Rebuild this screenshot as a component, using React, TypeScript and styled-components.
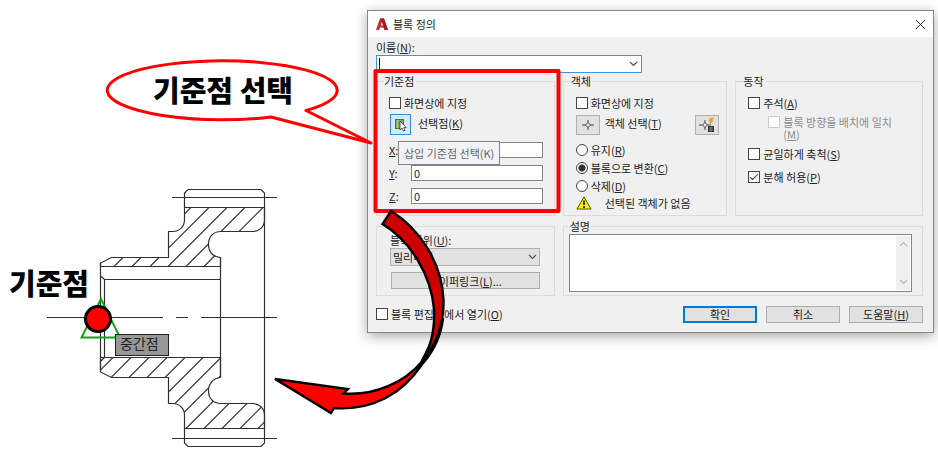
import React, { useState } from 'react';
import styled, { createGlobalStyle } from 'styled-components';

const GlobalStyle = createGlobalStyle`
  *, *::before, *::after { box-sizing: border-box; }
  body {
    margin: 0;
    background: #fff;
    color: #222;
    font: 11px/12px "Noto Sans CJK KR", sans-serif;
  }
  button, input, select, textarea { font: inherit; color: inherit; margin: 0; }
  u { text-underline-offset: 1px; }
`;

const Scene = styled.main`
  position: relative;
  display: flex;
  align-items: flex-start;
`;

const GearFigure = styled.svg`
  flex: 0 0 366px;
  width: 366px;
  height: 456px;
`;

const Annotations = styled.svg`
  position: absolute;
  top: 0;
  left: 0;
  pointer-events: none;
`;

const Dialog = styled.form`
  flex: 1;
  margin: 10px 4px 0 1px;
  border: 1px solid #868686;
  background: #f0f0f0;
  box-shadow: 0 3px 12px rgba(0, 0, 0, 0.35);
`;

const TitleBar = styled.header`
  display: flex;
  align-items: center;
  gap: 5px;
  height: 26px;
  padding: 0 7px 0 8px;
  background: #fff;
`;

const Title = styled.h1`
  flex: 1;
  margin: 0;
  font-size: 11px;
  font-weight: 400;
`;

const IconButton = styled.button`
  display: flex;
  padding: 0;
  border: 0;
  background: none;
`;

const Body = styled.div`
  padding: 4px 10px 9px 8px;
`;

const NameField = styled.label`
  display: block;
`;

const Combo = styled.span`
  display: flex;
  align-items: center;
  width: 266px;
  height: 18px;
  margin-top: 2px;
  padding-right: 3px;
  border: 1px solid #3d95e0;
  background: #fff;
`;

const ComboInput = styled.input`
  flex: 1;
  min-width: 0;
  height: 14px;
  padding: 0 2px;
  border: 0;
  outline: 0;
  background: none;
`;

const Caret = styled.span`
  width: 1px;
  height: 12px;
  margin-left: 2px;
  background: #111;
`;

const Groups = styled.div`
  display: grid;
  grid-template-columns: 179fr 165fr 188fr;
  column-gap: 8px;
  row-gap: 4px;
  margin-top: 2px;
`;

const Group = styled.fieldset<{ $span?: number }>`
  display: flex;
  flex-direction: column;
  min-width: 0;
  grid-column: span ${p => p.$span ?? 1};
  margin: 0;
  padding: 7px 11px 5px 12px;
  border: 1px solid #dcdcdc;
`;

const DescriptionGroup = styled(Group)`
  padding: 2px 10px 3px 5px;
`;

const UnitGroup = styled.div`
  display: flex;
  flex-direction: column;
  margin-top: 6px;
  padding: 7px 14px 6px 13px;
  border: 1px solid #dcdcdc;
`;

const Legend = styled.legend`
  margin-left: -5px;
  padding: 0 2px 0 0;
`;

const DescriptionLegend = styled(Legend)`
  margin-left: 1px;
`;

const Option = styled.label<{ $height?: number }>`
  display: flex;
  align-items: center;
  gap: 3px;
  height: ${p => p.$height ?? 18}px;
  white-space: nowrap;
`;

const SubOption = styled(Option)`
  align-items: flex-start;
  padding: 4px 0 0 20px;
  color: #8c8c8c;
`;

const Check = styled.input.attrs({ type: 'checkbox' })`
  flex: none;
  appearance: none;
  width: 12px;
  height: 12px;
  border: 1px solid #444;
  background: #fff;
  &:disabled { border-color: #ccc; }
  &:checked::after {
    content: "";
    display: block;
    width: 8px;
    height: 4px;
    margin: 2px 0 0 1px;
    border: solid #333;
    border-width: 0 0 1px 1px;
    transform: rotate(-45deg);
  }
`;

const Radio = styled.input.attrs({ type: 'radio' })`
  flex: none;
  appearance: none;
  width: 12px;
  height: 12px;
  border: 1px solid #444;
  border-radius: 50%;
  background: #fff;
  &:checked { background: radial-gradient(circle, #333 0 3px, #fff 4px); }
`;

const ActionRow = styled.div`
  display: flex;
  align-items: center;
  height: 21px;
  margin-top: 2px;
`;

const ActionLabel = styled.label`
  flex: 1;
  padding-bottom: 4px;
  white-space: nowrap;
`;

const PickButton = styled.button`
  display: flex;
  align-items: center;
  justify-content: center;
  width: 21px;
  height: 21px;
  margin: 0 7px 0 1px;
  padding: 0;
  border: 1px solid #2e8fe0;
  background: #d5e9f8;
`;

const ToolButton = styled.button`
  display: flex;
  align-items: center;
  justify-content: center;
  width: 24px;
  height: 20px;
  margin-right: 5px;
  padding: 0;
  border: 1px solid #b0b0b0;
  background: #e1e1e1;
`;

const QuickButton = styled(ToolButton)`
  margin-right: -4px;
`;

const Coordinates = styled.div`
  display: grid;
  gap: 7px;
  margin-top: 7px;
`;

const Coordinate = styled.label`
  display: grid;
  grid-template-columns: 22px 1fr;
  align-items: center;
`;

const CoordinateInput = styled.input`
  min-width: 0;
  height: 16px;
  padding: 0 2px;
  border: 1px solid #858585;
  background: #fff;
`;

const Tooltip = styled.div`
  position: absolute;
  left: 398px;
  top: 141px;
  padding: 5px;
  border: 1px solid #858585;
  background: #f2f3f8;
  color: #666;
  white-space: nowrap;
`;

const Radios = styled.div`
  margin: 6px 0 1px;
`;

const Warning = styled.div`
  display: flex;
  align-items: center;
  gap: 13px;
  white-space: nowrap;
`;

const UnitSelect = styled.span`
  display: grid;
  margin-top: 2px;
  align-items: center;
  justify-items: end;
  & > * { grid-area: 1 / 1; }
  & > svg { margin-right: 3px; pointer-events: none; }
`;

const Select = styled.select`
  appearance: none;
  width: 100%;
  height: 18px;
  padding: 0 2px;
  border: 1px solid #b0b0b0;
  border-radius: 0;
  background: #e1e1e1;
`;

const PushButton = styled.button<{ $primary?: boolean }>`
  height: 17px;
  padding: 0;
  border: ${p => (p.$primary ? '2px solid #0078d7' : '1px solid #adadad')};
  background: #e1e1e1;
  line-height: 12px;
  white-space: nowrap;
`;

const LinkButton = styled(PushButton)`
  margin: 6px 0 0 1px;
`;

const DescriptionBox = styled.div`
  display: flex;
  flex: 1;
  height: 58px;
  padding: 1px;
  border: 1px solid #858585;
  background: #fff;
`;

const Description = styled.textarea`
  flex: 1;
  min-width: 0;
  border: 0;
  outline: 0;
  resize: none;
  background: none;
`;

const ScrollRail = styled.div`
  display: flex;
  flex-direction: column;
  align-items: center;
  justify-content: space-between;
  width: 14px;
  padding: 5px 0;
  background: #f0f0f0;
`;

const Footer = styled.footer`
  display: flex;
  align-items: center;
  gap: 9px;
  margin-top: 9px;
`;

const FooterOption = styled.div`
  flex: 1;
`;

const FooterButton = styled(PushButton)`
  width: 74px;
`;

const Chevron = ({ up = false, color = '#555' }: { up?: boolean; color?: string }) => (
  <svg width="9" height="6" viewBox="0 0 9 6" aria-hidden="true">
    <path d={up ? 'M1 5L4.500 1.500L8 5' : 'M1 1L4.500 4.500L8 1'} fill="none" stroke={color} strokeWidth="1.200" />
  </svg>
);

const Crosshair = ({ quick = false }: { quick?: boolean }) => (
  <svg width="16" height="16" viewBox="0 0 16 16" aria-hidden="true">
    <g transform={quick ? 'translate(-2 0)' : undefined} fill="none" stroke="#444">
      <path d="M2 8H6M10 8H14M8 3V6M8 10V13" />
      <path d="M8 5.500L10.500 8L8 10.500L5.500 8Z" fill="#eee" />
    </g>
    {quick && (
      <g>
        <path d="M11 1L15 0.500L13 3.500H15L10 8L11.500 4.500H9.500Z" fill="#f39a1e" />
        <path d="M9 9H15V15H9Z" fill="#333" />
        <path d="M10 11H14M10 13H14M12 9.500V15" stroke="#aaa" strokeWidth="0.600" />
      </g>
    )}
  </svg>
);

const PickIcon = () => (
  <svg width="15" height="15" viewBox="0 0 15 15" aria-hidden="true">
    <rect x="2.500" y="2.500" width="8" height="9" fill="#78ad60" stroke="#3f7d33" />
    <path d="M4.500 3V11" stroke="#a9cf91" />
    <path d="M7 4V13L9 11.200L10.500 14L12 13.300L10.700 10.600H13.200Z" fill="#fff" stroke="#333" strokeWidth="0.800" />
  </svg>
);

const UPPER = 'M168.500 257.500V231.500H173A11.500 11.500 0 0 0 184.500 220V207.500H264.500V220A11.500 11.500 0 0 1 253 231.500H221C213 231.500 208.500 237 208.500 244.500C208.500 251 212 256.500 220.500 257.500V266.500H100.500V263L111.500 257.500Z';
const LOWER = 'M100.500 357.500H220.500V377.500C213 378 208.500 384 208.500 391C208.500 398 213 403.500 221 403.500H253A11.500 11.500 0 0 1 264.500 415V428.500H184.500V415A11.500 11.500 0 0 0 173 403.500H168.500V377.500H111.500L100.500 372Z';

const hatch = (sums: number[], top: number, bottom: number) =>
  sums.map(s => `M${s - top} ${top}L${s - bottom} ${bottom}`).join('');
const range = (start: number, count: number) => Array.from({ length: count }, (_, i) => start + i * 18);

const Gear = () => (
  <GearFigure viewBox="0 0 366 456" role="img" aria-label="기어 단면도">
    <clipPath id="upper"><path d={UPPER} /></clipPath>
    <clipPath id="lower"><path d={LOWER} /></clipPath>
    <g fill="none" stroke="#303030" strokeWidth="1.200">
      <path d={hatch(range(380.5, 6), 200, 270)} clipPath="url(#upper)" />
      <path d={hatch(range(470.5, 13), 350, 430)} clipPath="url(#lower)" />
      <path d={UPPER} />
      <path d={LOWER} />
      <path d="M184.500 207.500V193L188 189.500H261L264.500 193V443L261 446.500H188L184.500 443V428" />
      <path d="M172 197.500H277M172 438.500H277" />
      <path d="M100.500 263V372M220.500 257.500V378M100.500 276L104.500 279.500H220.500M104.500 279.500V357.500L101 361" />
      <path d="M47 317.500H163M176 317.500H188M201 317.500H277" />
    </g>
    <path d="M101 299L120 337.500H81.500Z" fill="none" stroke="#10a510" strokeWidth="2" />
    <circle cx="98" cy="319" r="12.500" fill="#f00" stroke="#000" strokeWidth="3" />
    <rect x="115.500" y="334.500" width="53" height="21" fill="#979797" stroke="#222" />
    <text x="120" y="349" fontSize="14" fill="#222">중간점</text>
    <text x="9" y="295" fontSize="29" fontWeight="900" fill="#000">기준점</text>
  </GearFigure>
);

const Callouts = () => (
  <Annotations width="938" height="456" viewBox="0 0 938 456">
    <rect x="375.500" y="71" width="183" height="140" fill="none" stroke="#f00" strokeWidth="4" strokeLinejoin="round" />
    <path d="M306 110.500A115 29.500 0 1 0 271 117L371 143Z" fill="#fff" stroke="#f00" strokeWidth="3" strokeLinejoin="round" />
    <text x="153" y="102" fontSize="29" fontWeight="900" fill="#000">기준점 선택</text>
    <g stroke="#000" strokeWidth="2.400" strokeLinejoin="miter">
      <path d="M421.500 362C405 382 375 396 343.500 393.500L348 389L275 379L331 413L334 408C372 411 402 394 421.500 365C433 352 441 337 443 318Z" fill="#f00" />
      <path d="M391 211L382.500 224C412 242 431 276 434 309C435 328 431 347 421.500 362C436 345 444 325 443.500 300C442 263 420 229 391 211Z" fill="#c00" />
    </g>
  </Annotations>
);

export default function App() {
  const [conversion, setConversion] = useState('convert');
  const conversions = [
    { id: 'retain', text: '유지', mnemonic: 'R' },
    { id: 'convert', text: '블록으로 변환', mnemonic: 'C' },
    { id: 'delete', text: '삭제', mnemonic: 'D' },
  ];

  return (
    <>
      <GlobalStyle />
      <Scene>
        <Gear />
        <Dialog onSubmit={e => e.preventDefault()}>
          <TitleBar>
            <svg width="12" height="13" viewBox="0 0 12 13" aria-hidden="true">
              <path d="M0 12L4 0.500H8L12 12H8.500L7.700 9.500H4L3 12Z" fill="#c1272d" />
              <path d="M4 0.500H8L12 12H8.500L5.800 3.500Z" fill="#a51d24" />
              <path d="M5.900 4L4.700 7.500H7Z" fill="#fff" />
            </svg>
            <Title>블록 정의</Title>
            <IconButton type="button" aria-label="닫기">
              <svg width="11" height="11" viewBox="0 0 11 11"><path d="M1 1L10 10M10 1L1 10" stroke="#333" /></svg>
            </IconButton>
          </TitleBar>
          <Body>
            <NameField>
              이름(<u>N</u>):
              <Combo><Caret /><ComboInput /><Chevron /></Combo>
            </NameField>
            <Groups>
              <Group>
                <Legend>기준점</Legend>
                <Option><Check /><OptionText>화면상에 지정</OptionText></Option>
                <ActionRow>
                  <PickButton type="button" id="pick"><PickIcon /></PickButton>
                  <ActionLabel htmlFor="pick">선택점(<u>K</u>)</ActionLabel>
                </ActionRow>
                <Coordinates>
                  {['X', 'Y', 'Z'].map(axis => (
                    <Coordinate key={axis}>
                      <span><u>{axis}</u>:</span>
                      <CoordinateInput defaultValue="0" />
                    </Coordinate>
                  ))}
                </Coordinates>
              </Group>
              <Group>
                <Legend>객체</Legend>
                <Option><Check /><OptionText>화면상에 지정</OptionText></Option>
                <ActionRow>
                  <ToolButton type="button" id="objects"><Crosshair /></ToolButton>
                  <ActionLabel htmlFor="objects">객체 선택(<u>T</u>)</ActionLabel>
                  <QuickButton type="button" aria-label="신속 선택"><Crosshair quick /></QuickButton>
                </ActionRow>
                <Radios>
                  {conversions.map(c => (
                    <Option key={c.id}>
                      <Radio name="conversion" checked={conversion === c.id} onChange={() => setConversion(c.id)} />
                      <OptionText>{c.text}(<u>{c.mnemonic}</u>)</OptionText>
                    </Option>
                  ))}
                </Radios>
                <Warning>
                  <svg width="16" height="14" viewBox="0 0 16 14" aria-hidden="true">
                    <path d="M8 1L15 13H1Z" fill="#ffee00" stroke="#5a5500" strokeLinejoin="round" />
                    <path d="M8 4.500V9M8 10V12" stroke="#111" strokeWidth="1.600" />
                  </svg>
                  선택된 객체가 없음
                </Warning>
              </Group>
              <Group>
                <Legend>동작</Legend>
                <Option><Check /><OptionText>주석(<u>A</u>)</OptionText></Option>
                <SubOption $height={32}>
                  <Check disabled />
                  <OptionText>블록 방향을 배치에 일치<br />(<u>M</u>)</OptionText>
                </SubOption>
                <Option $height={20}><Check /><OptionText>균일하게 축척(<u>S</u>)</OptionText></Option>
                <Option $height={26}><Check defaultChecked /><OptionText>분해 허용(<u>P</u>)</OptionText></Option>
              </Group>
              <UnitGroup>
                <label htmlFor="unit">블록 단위(<u>U</u>):</label>
                <UnitSelect>
                  <Select id="unit"><option>밀리미터</option></Select>
                  <Chevron />
                </UnitSelect>
                <LinkButton type="button">하이퍼링크(<u>L</u>)...</LinkButton>
              </UnitGroup>
              <DescriptionGroup $span={2}>
                <DescriptionLegend>설명</DescriptionLegend>
                <DescriptionBox>
                  <Description aria-label="설명" />
                  <ScrollRail><Chevron up color="#b5b5b5" /><Chevron color="#b5b5b5" /></ScrollRail>
                </DescriptionBox>
              </DescriptionGroup>
            </Groups>
            <Footer>
              <FooterOption>
                <Option><Check /><OptionText>블록 편집기에서 열기(<u>O</u>)</OptionText></Option>
              </FooterOption>
              <FooterButton type="submit" $primary>확인</FooterButton>
              <FooterButton type="button">취소</FooterButton>
              <FooterButton type="button">도움말(<u>H</u>)</FooterButton>
            </Footer>
          </Body>
        </Dialog>
        <Tooltip role="tooltip">삽입 기준점 선택(K)</Tooltip>
        <Callouts />
      </Scene>
    </>
  );
}

const OptionText = styled.span`
  white-space: nowrap;
`;
